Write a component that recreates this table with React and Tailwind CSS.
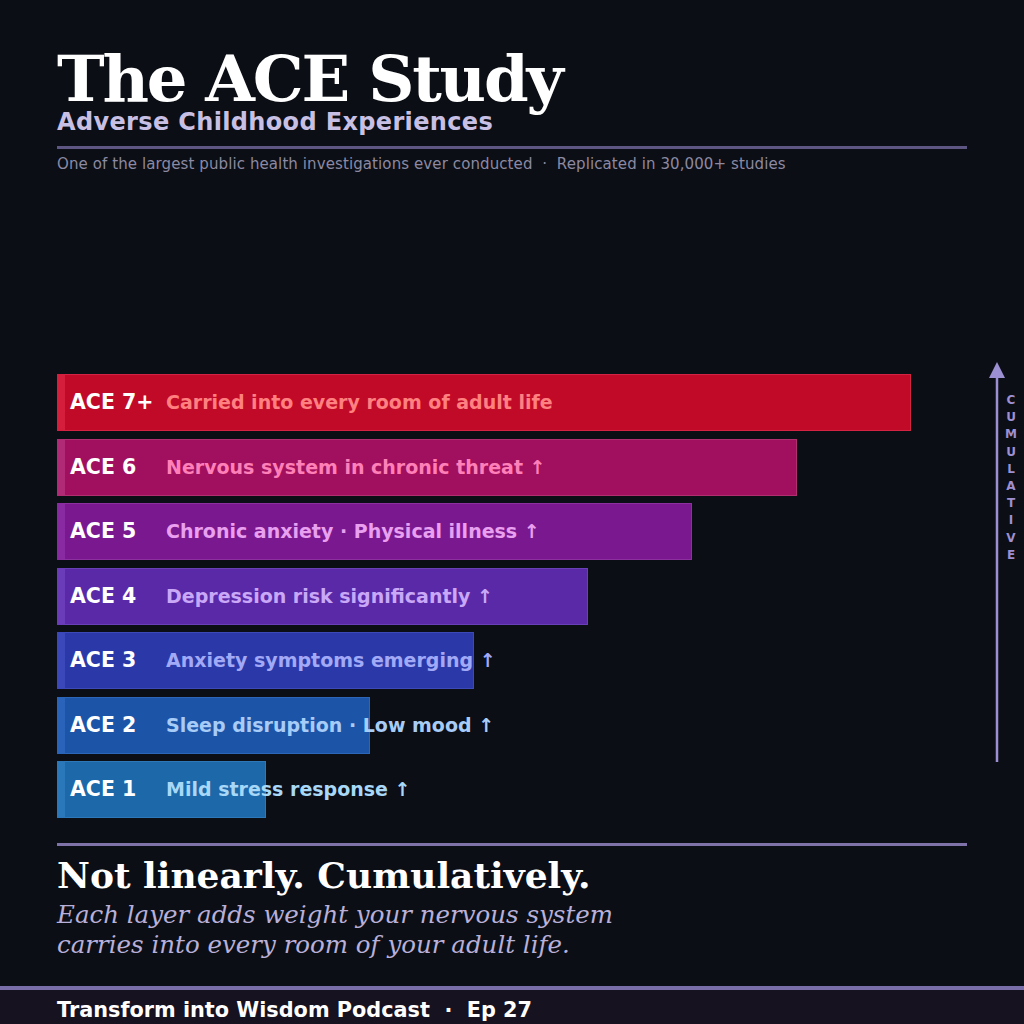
import React from "react";

const bars = [
  { label: "ACE 7+", desc: "Carried into every room of adult life", w: "w-[854px]", cls: "bg-[#c00a28] border-[#d32444] border-l-[#d41e3c]", tc: "text-[#ff8080]" },
  { label: "ACE 6", desc: "Nervous system in chronic threat ↑", w: "w-[740px]", cls: "bg-[#a0105e] border-[#b0306f] border-l-[#b02a75]", tc: "text-[#ff80b8]" },
  { label: "ACE 5", desc: "Chronic anxiety · Physical illness ↑", w: "w-[635px]", cls: "bg-[#7a188f] border-[#8c30a0] border-l-[#8a2aa2]", tc: "text-[#eaa0f0]" },
  { label: "ACE 4", desc: "Depression risk significantly ↑", w: "w-[531px]", cls: "bg-[#5a29a8] border-[#6a40b8] border-l-[#6a3cba]", tc: "text-[#caa8f8]" },
  { label: "ACE 3", desc: "Anxiety symptoms emerging ↑", w: "w-[417px]", cls: "bg-[#2b39a8] border-[#3c4ab8] border-l-[#3a48ba]", tc: "text-[#a2aaf8]" },
  { label: "ACE 2", desc: "Sleep disruption · Low mood ↑", w: "w-[313px]", cls: "bg-[#1c55a8] border-[#2c66b8] border-l-[#2a64ba]", tc: "text-[#a8ccf8]" },
  { label: "ACE 1", desc: "Mild stress response ↑", w: "w-[209px]", cls: "bg-[#1c68a8] border-[#2c78b8] border-l-[#2a78ba]", tc: "text-[#a8d8f8]" },
];

const sans = "font-['DejaVu_Sans',sans-serif]";
const serif = "font-['DejaVu_Serif',serif]";

export default function App() {
  return (
    <div className="w-[1024px] h-[1024px] bg-[#0b0e15] flex flex-col overflow-hidden">
      <div className="pl-[57px] pt-[46px]">
        <h1 className={`${serif} font-bold text-white text-[64px] leading-[66px] tracking-[-2.2px]`}>The ACE Study</h1>
        <div className={`${sans} font-bold text-[#c8c0e4] text-[24px] leading-[26px] tracking-[0.35px] -mt-[3px]`}>Adverse Childhood Experiences</div>
        <div className="w-[910px] h-[3px] bg-[#5e5682] mt-[11px]" />
        <div className={`${sans} text-[#8c89a2] text-[15px] leading-[18px] tracking-[0.1px] mt-[6px]`}>
          One of the largest public health investigations ever conducted&nbsp;&nbsp;·&nbsp;&nbsp;Replicated in 30,000+ studies
        </div>
      </div>

      <div className="flex pl-[57px] mt-[189px]">
        <div className="w-[910px] flex flex-col gap-[7.5px] pt-[12px]">
          {bars.map((b) => (
            <div key={b.label} className={`${b.w} h-[57px] border border-l-[8px] ${b.cls} flex items-center whitespace-nowrap`}>
              <span className={`${sans} font-bold text-white text-[20.5px] pl-[5px] w-[101px] shrink-0`}>{b.label}</span>
              <span className={`${sans} font-bold text-[19px] ${b.tc}`}>{b.desc}</span>
            </div>
          ))}
        </div>
        <div className="ml-[22px] flex">
          <svg width="16" height="400" viewBox="0 0 16 400" className="block">
            <polygon points="8,0 0,16 16,16" fill="#9d90d2" />
            <rect x="6.75" y="14" width="2.5" height="386" fill="#9d90d2" />
          </svg>
          <div className={`${sans} font-bold text-[12px] leading-[17.2px] text-[#9d90d2] flex flex-col items-center w-[12px] ml-[0px] pt-[30px]`}>
            {"CUMULATIVE".split("").map((c, i) => (
              <span key={i}>{c}</span>
            ))}
          </div>
        </div>
      </div>

      <div className="pl-[57px] mt-[25px]">
        <div className="w-[910px] h-[3px] bg-[#7e72a8]" />
        <div className={`${serif} font-bold text-white text-[36px] leading-[40px] mt-[9px]`}>Not linearly. Cumulatively.</div>
        <div className={`${serif} italic text-[#b8b0d8] text-[24.5px] leading-[30px] mt-[5px]`}>
          Each layer adds weight your nervous system
          <br />
          carries into every room of your adult life.
        </div>
      </div>

      <div className="mt-auto border-t-[4px] border-[#7a6ea8] bg-[#16121f] h-[38px] pl-[57px] flex items-center">
        <span className={`${sans} font-bold text-white text-[20.8px] leading-[24px] pt-[6px]`}>
          Transform into Wisdom Podcast&nbsp;&nbsp;·&nbsp;&nbsp;Ep 27
        </span>
      </div>
    </div>
  );
}
